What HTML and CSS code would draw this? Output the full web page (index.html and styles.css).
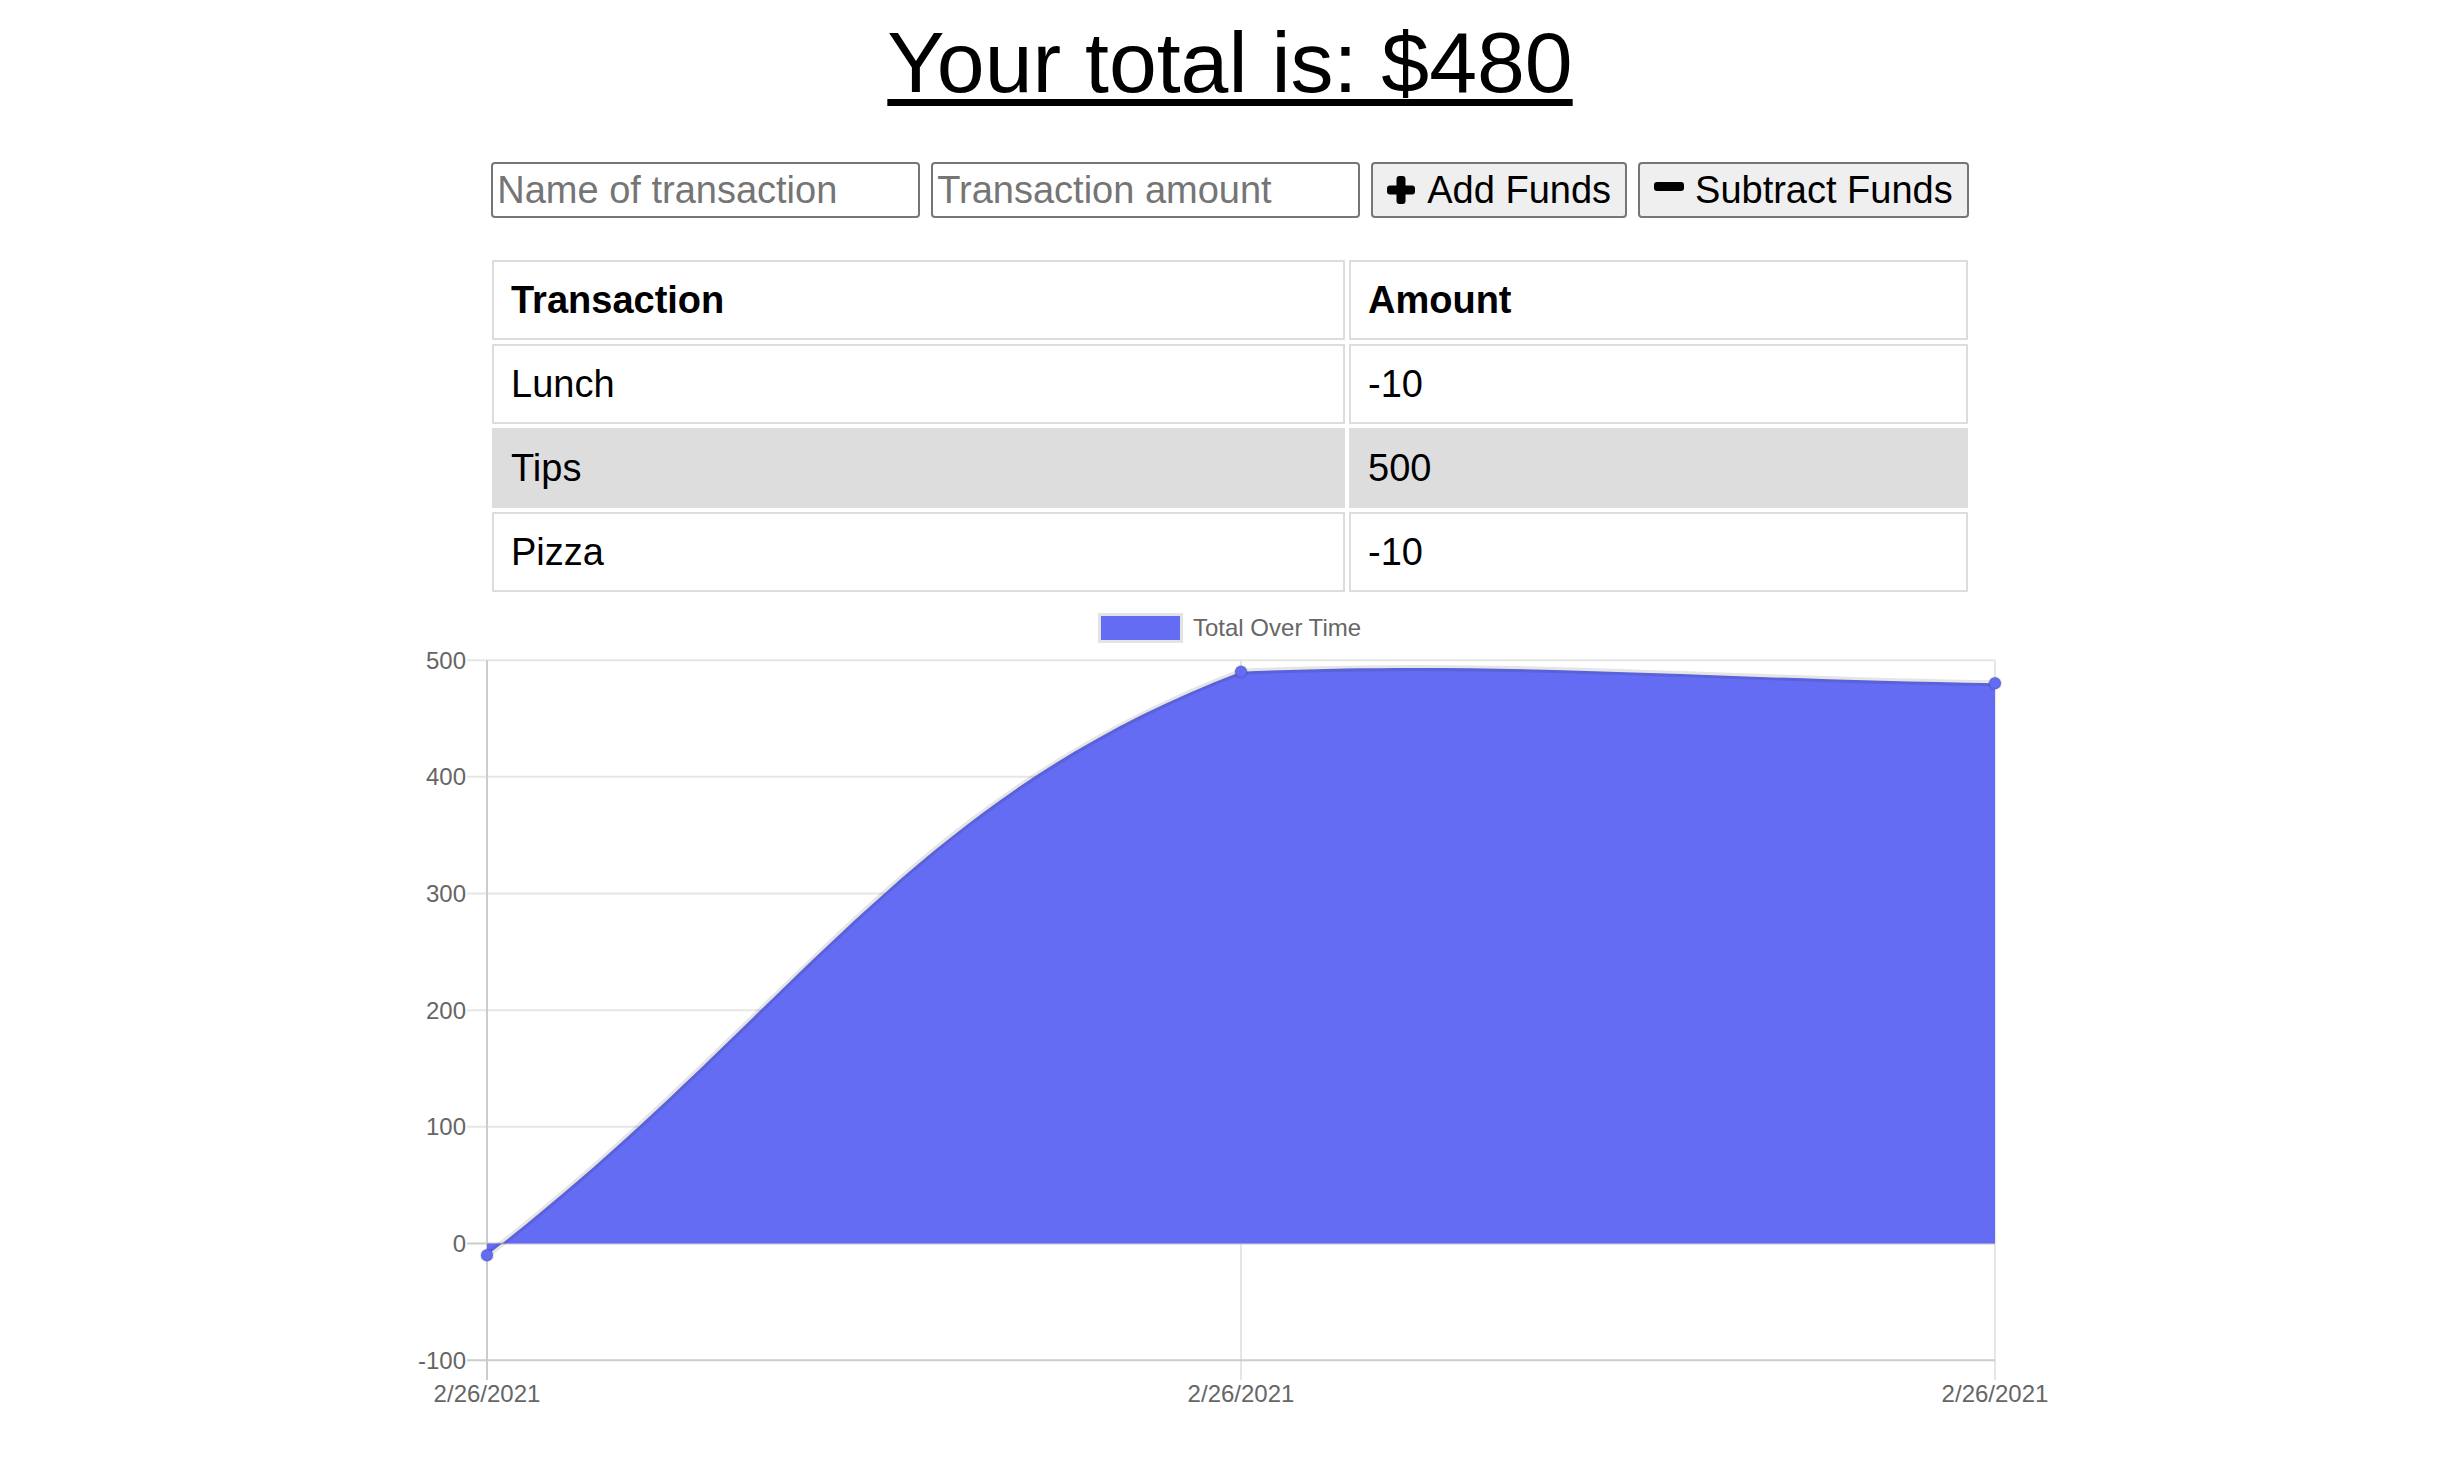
FILE: index.html
```
<!DOCTYPE html>
<html lang="en">
<head>
<meta charset="utf-8">
<title>Budget Tracker</title>
<link rel="stylesheet" href="styles.css">
</head>
<body>
<div class="app">
  <h1 class="total">Your total is: $480</h1>
  <div class="entry">
    <input class="field" type="text" placeholder="Name of transaction">
    <input class="field" type="number" placeholder="Transaction amount">
    <button class="btn btn-add" type="button">
      <svg class="icon" width="28" height="28" viewBox="0 0 28 28"><rect x="9.5" y="0" width="9" height="28" rx="3"/><rect x="0" y="9.5" width="28" height="9" rx="3"/></svg>
      <span>Add Funds</span>
    </button>
    <button class="btn btn-sub" type="button">
      <svg class="icon" width="30" height="28" viewBox="0 0 30 28"><rect x="0" y="6" width="30" height="9" rx="3"/></svg>
      <span>Subtract Funds</span>
    </button>
  </div>
  <table class="ledger">
    <thead>
      <tr><th class="col-name">Transaction</th><th>Amount</th></tr>
    </thead>
    <tbody>
      <tr><td>Lunch</td><td>-10</td></tr>
      <tr class="row-alt"><td>Tips</td><td>500</td></tr>
      <tr><td>Pizza</td><td>-10</td></tr>
    </tbody>
  </table>
</div>
<svg class="chart" width="2444" height="840" viewBox="8 0 2444 840">
  <rect x="1099.5" y="18.5" width="82" height="27" fill="#646cf4" stroke="#e3e3e3" stroke-width="3"/>
  <text class="legend-label" x="1193" y="40">Total Over Time</text>
  <g stroke="#e6e6e6" stroke-width="2">
    <line x1="467" y1="64.2" x2="1995" y2="64.2"/>
    <line x1="467" y1="180.8" x2="1995" y2="180.8"/>
    <line x1="467" y1="297.5" x2="1995" y2="297.5"/>
    <line x1="467" y1="414.2" x2="1995" y2="414.2"/>
    <line x1="467" y1="530.8" x2="1995" y2="530.8"/>
    <line x1="1241" y1="64.2" x2="1241" y2="784"/>
    <line x1="1995" y1="64.2" x2="1995" y2="784"/>
  </g>
  <g stroke="#cccccc" stroke-width="2">
    <line x1="467" y1="647.5" x2="1995" y2="647.5"/>
    <line x1="467" y1="764.2" x2="1995" y2="764.2"/>
    <line x1="487" y1="64.2" x2="487" y2="784"/>
  </g>
  <path d="M487,659.2 C788.6,425.8 904.2,203.4 1241,75.7 C1507.4,64.2 1693.4,82.7 1995,87.3 L1995,647.5 L487,647.5 Z" fill="#646cf4"/>
  <path d="M487,659.2 C788.6,425.8 904.2,203.4 1241,75.7 C1507.4,64.2 1693.4,82.7 1995,87.3" fill="none" stroke="rgba(0,0,0,0.1)" stroke-width="6"/>
  <g fill="#646cf4" stroke="rgba(0,0,0,0.1)" stroke-width="2">
    <circle cx="487" cy="659.2" r="6"/>
    <circle cx="1241" cy="75.7" r="6"/>
    <circle cx="1995" cy="87.3" r="6"/>
  </g>
  <g class="tick-label" text-anchor="end">
    <text x="466" y="72.7">500</text>
    <text x="466" y="189.3">400</text>
    <text x="466" y="306">300</text>
    <text x="466" y="422.7">200</text>
    <text x="466" y="539.3">100</text>
    <text x="466" y="656">0</text>
    <text x="466" y="772.7">-100</text>
  </g>
  <g class="tick-label" text-anchor="middle">
    <text x="487" y="805.5">2/26/2021</text>
    <text x="1241" y="805.5">2/26/2021</text>
    <text x="1995" y="805.5">2/26/2021</text>
  </g>
</svg>
</body>
</html>
```
FILE: styles.css
```
body {
  margin: 0;
  padding-left: 8px;
  background: #ffffff;
  color: #000000;
  font-family: "Liberation Sans", Arial, sans-serif;
}

.app {
  width: 1484px;
  margin: 0 auto;
  padding-top: 13px;
}

.total {
  margin: 0;
  text-align: center;
  font-size: 86px;
  line-height: 98px;
  font-weight: normal;
  text-decoration: underline;
  text-decoration-thickness: 7px;
  text-underline-offset: 7px;
}

.entry {
  display: flex;
  justify-content: center;
  gap: 11px;
  margin-top: 51px;
}

.field {
  width: 429px;
  height: 56px;
  box-sizing: border-box;
  border: 2px solid #767676;
  border-radius: 4px;
  padding: 0 4px;
  background: #ffffff;
  color: #000000;
  font-family: "Liberation Sans", Arial, sans-serif;
  font-size: 38px;
  -moz-appearance: textfield;
}

.field::-webkit-outer-spin-button,
.field::-webkit-inner-spin-button {
  -webkit-appearance: none;
  margin: 0;
}

.field::placeholder {
  color: #757575;
}

.btn {
  height: 56px;
  box-sizing: border-box;
  border: 2px solid #767676;
  border-radius: 4px;
  background: #efefef;
  color: #000000;
  font-family: "Liberation Sans", Arial, sans-serif;
  font-size: 38px;
  padding: 0 14px;
  display: inline-flex;
  align-items: center;
  justify-content: center;
  gap: 12px;
  white-space: nowrap;
  flex: none;
}

.btn-sub {
  gap: 11px;
}

.icon {
  display: block;
  fill: #000000;
  flex: none;
}

.ledger {
  width: 100%;
  border-spacing: 4px;
  margin-top: 38px;
  font-size: 38px;
}

.ledger th,
.ledger td {
  border: 2px solid #dddddd;
  padding: 16px 17px;
  line-height: 44px;
  text-align: left;
}

.ledger th {
  font-weight: bold;
}

.col-name {
  width: 815px;
}

.row-alt td {
  background: #dddddd;
}

.chart {
  display: block;
}

.legend-label,
.tick-label {
  font-family: "Liberation Sans", Arial, sans-serif;
  font-size: 24px;
  fill: #666666;
}
```
